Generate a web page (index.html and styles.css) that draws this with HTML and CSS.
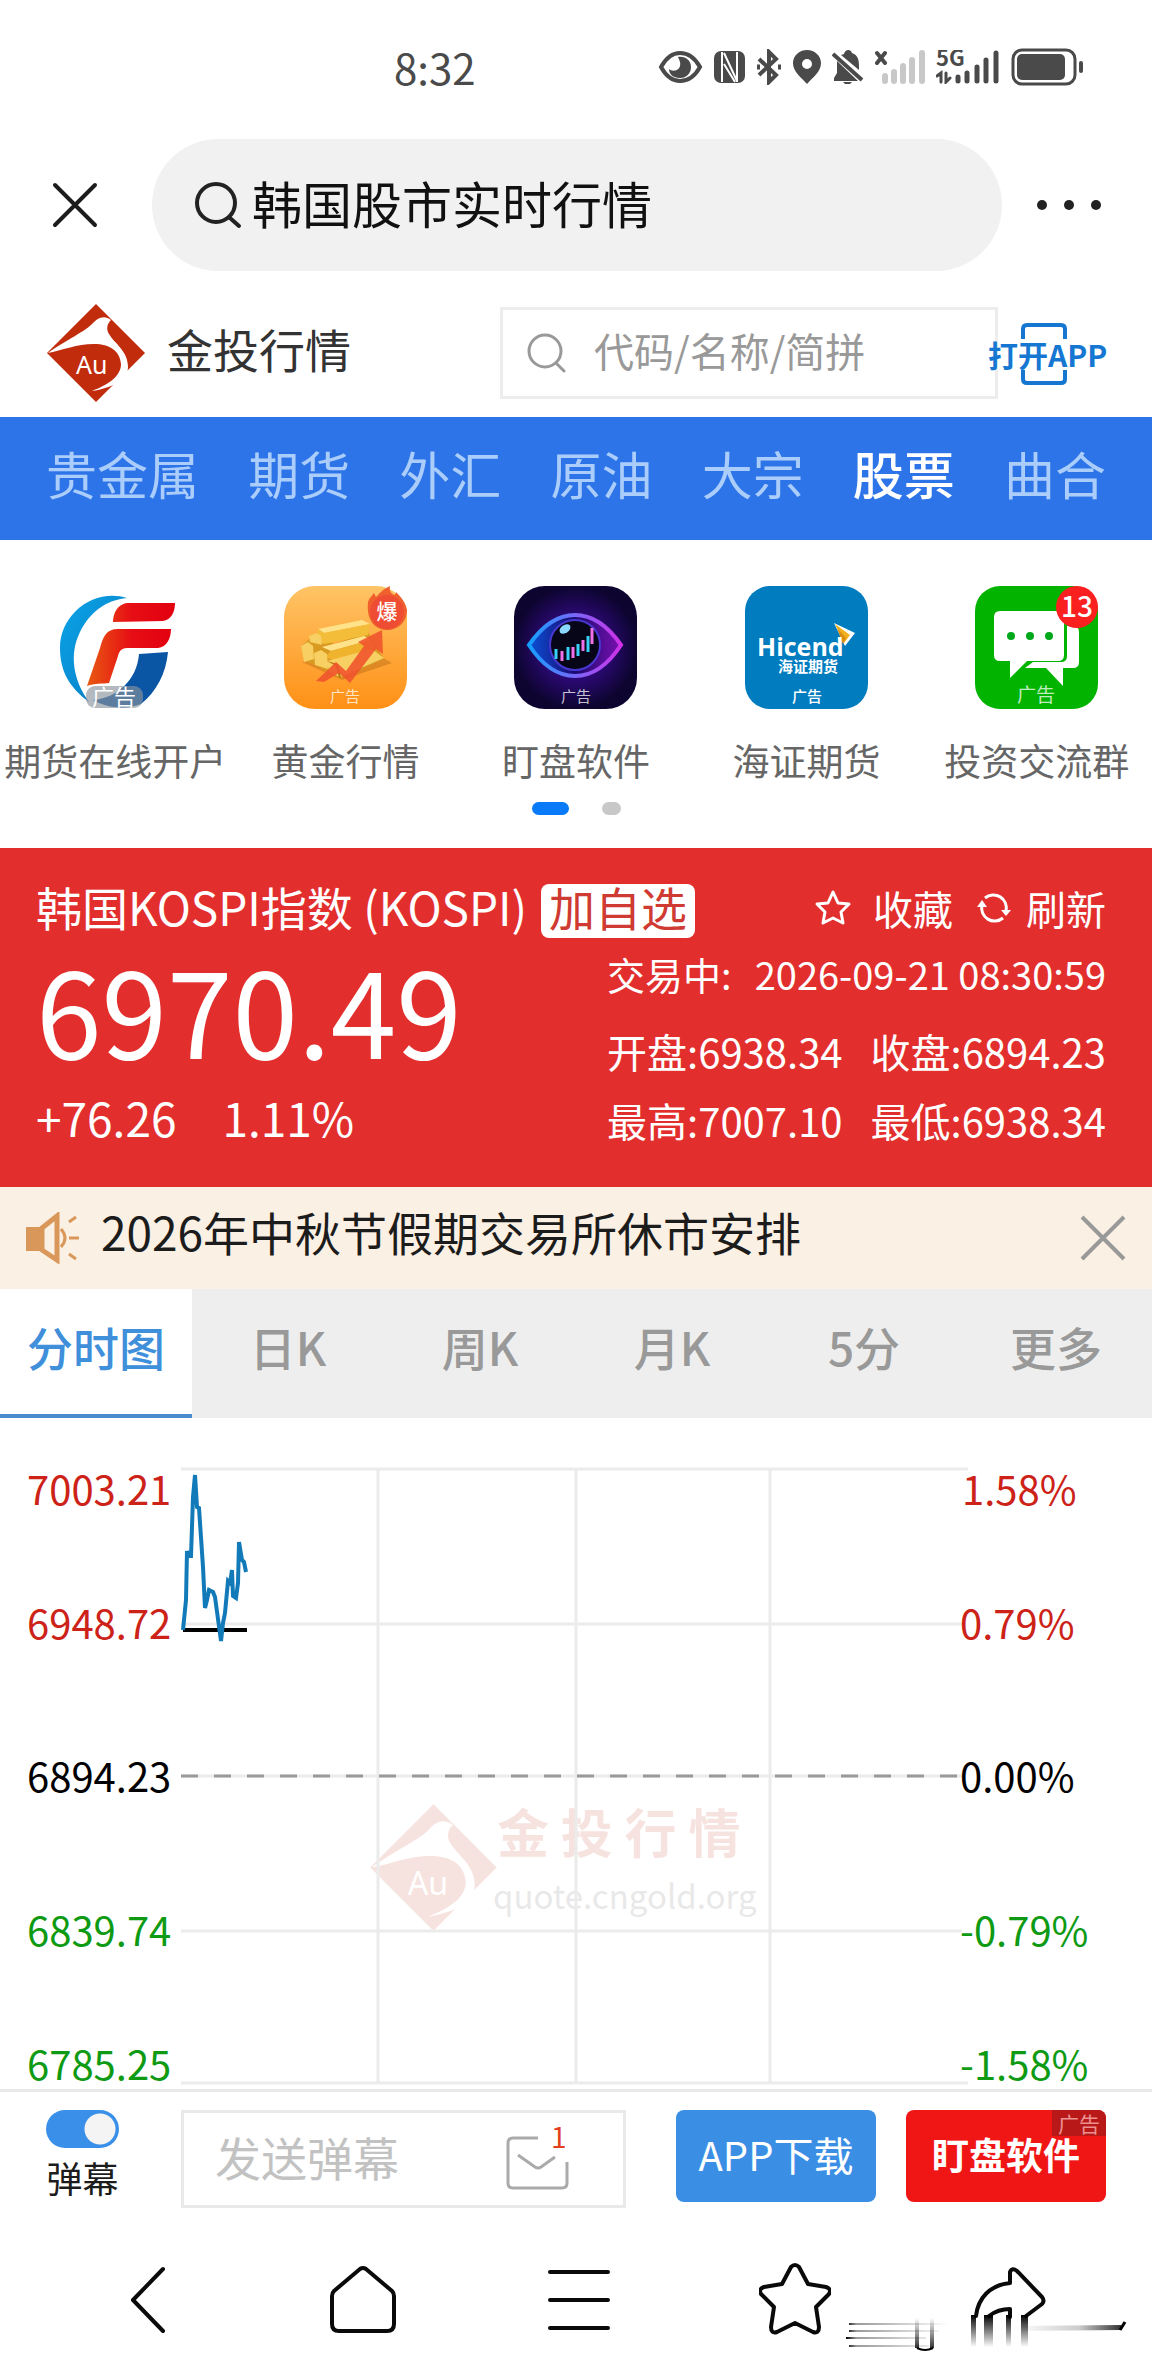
FILE: index.html
```html
<!DOCTYPE html>
<html lang="zh-CN">
<head>
<meta charset="utf-8">
<meta name="viewport" content="width=device-width, initial-scale=1">
<title>韩国股市实时行情</title>
<link rel="stylesheet" href="styles.css">
</head>
<body>
<svg width="0" height="0" class="defs" aria-hidden="true">
  <symbol id="au-logo" viewBox="0 0 100 100">
    <path fill="currentColor" d="M50 1 99 50 50 99 1 50Z"/>
    <path class="logo-cut" d="M2 50C20 37 40 28 47 20c5-6 12-8 18-3-4 4-5 9-2 14 6 10 19 17 19 33 0 13-16 21-36 24 15-6 29-14 29-27C74 48 64 41 48 41 30 41 18 47 2 50Z"/>
    <text class="logo-cut logo-au" x="30" y="71">Au</text>
  </symbol>
</svg>

<div class="status">
  <span class="time">8:32</span>
  <div class="status-icons">
    <svg width="45" height="34" viewBox="0 0 45 34" fill="none" stroke="#4a4a4a" stroke-width="4"><path d="M3 17C8 8 14 3 22 3s15 5 20 14C37 26 30 31 22 31S8 26 3 17Z"/><path fill="#4a4a4a" stroke="none" d="M20 7c8-1 13 4 13 10s-4 11-11 11-11-4-11-9c3 3 10 2 11-3 1-4-1-6-2-9Z"/></svg>
    <svg width="31" height="34" viewBox="0 0 31 34"><rect y="1" width="31" height="32" rx="7" fill="#4a4a4a"/><path d="M8 32V2M23 2v30M10 3l13 28M10 14l11 18" fill="none" stroke="#fff" stroke-width="2"/></svg>
    <svg width="26" height="36" viewBox="0 0 26 36" fill="none" stroke="#4a4a4a" stroke-width="4"><path d="m3 10 17 16-7 7V3l7 7L3 26"/><path d="m1 18 3 0m18 0 3 0" stroke-width="5"/></svg>
    <svg width="28" height="34" viewBox="0 0 28 34"><path fill="#4a4a4a" fill-rule="evenodd" d="M14 0c8 0 14 6 14 13 0 9-8 14-14 21C8 27 0 22 0 13 0 6 6 0 14 0Zm0 9a5 5 0 1 0 0 10 5 5 0 0 0 0-10Z"/></svg>
    <svg width="32" height="34" viewBox="0 0 32 34"><path fill="#4a4a4a" d="M12 4c1-5 7-5 8-1 6 2 7 7 7 13v4L9 5ZM5 11l21 20H2v-3l3-5ZM11 32h9l-2 2h-5Z"/><path d="m1 4 29 26" stroke="#4a4a4a" stroke-width="4"/></svg>
    <svg width="50" height="34" viewBox="0 0 50 34" stroke-width="6" stroke-linecap="round"><path d="m2 3 8 10m0-10L2 13" stroke="#4a4a4a" stroke-width="4"/><path d="M10 26v5m9-9v9m9-15v15m9-21v21M47 3v28" stroke="#c8c8c8"/></svg>
    <svg width="64" height="34" viewBox="0 0 64 34" stroke="#4a4a4a" stroke-width="5" stroke-linecap="round"><text class="fiveg" x="0" y="16">5G</text><path d="M22 27v4m9-8v8m10-14v14m9-21v21M60 3v28"/><path d="m1 26 4-3v9m5-9v9l4-4" fill="none" stroke-width="3"/></svg>
    <svg width="73" height="38" viewBox="0 0 73 38"><rect x="2" y="2" width="62" height="34" rx="9" fill="none" stroke="#4a4a4a" stroke-width="3"/><rect x="6" y="6" width="48" height="26" rx="5" fill="#4a4a4a"/><rect x="68" y="13" width="4" height="12" rx="2" fill="#4a4a4a"/></svg>
  </div>
</div>

<div class="address">
  <button class="plain" aria-label="关闭"><svg width="46" height="46" viewBox="0 0 46 46" stroke="#1c1c1c" stroke-width="4" stroke-linecap="round"><path d="m3 3 40 40m0-40L3 43"/></svg></button>
  <label class="pill">
    <svg width="48" height="48" viewBox="0 0 48 48" fill="none" stroke="#222" stroke-width="4" stroke-linecap="round"><circle cx="22" cy="22" r="19"/><path d="m36 37 9 8"/></svg>
    <input type="text" value="韩国股市实时行情" aria-label="搜索">
  </label>
  <button class="plain" aria-label="更多"><svg width="68" height="12" viewBox="0 0 68 12" fill="#222"><circle cx="6" cy="6" r="5"/><circle cx="33" cy="6" r="5"/><circle cx="60" cy="6" r="5"/></svg></button>
</div>

<header class="site">
  <svg class="logo" width="100" height="100"><use href="#au-logo"/></svg>
  <h1>金投行情</h1>
  <label class="search">
    <svg width="40" height="40" viewBox="0 0 40 40" fill="none" stroke="#999" stroke-width="3" stroke-linecap="round"><circle cx="18" cy="18" r="16"/><path d="m30 31 7 7"/></svg>
    <input type="text" placeholder="代码/名称/简拼" aria-label="代码/名称/简拼">
  </label>
  <a class="open-app" href="#app"><svg width="120" height="64" viewBox="0 0 120 64"><path d="M35 18V8q0-4 4-4h34q4 0 4 4v10M35 49v9q0 4 4 4h34q4 0 4-4v-9" fill="none" stroke="#1677d2" stroke-width="4"/><text x="0" y="46">打开APP</text></svg></a>
</header>

<nav class="markets">
  <a href="#gjs">贵金属</a><a href="#qh">期货</a><a href="#wh">外汇</a><a href="#yy">原油</a><a href="#dz">大宗</a><a href="#gp" class="on">股票</a><a href="#qu">曲合</a>
</nav>

<section class="apps">
  <div class="app-grid">
    <a href="#a1">
      <svg width="123" height="123" viewBox="0 0 123 123">
        <defs>
          <linearGradient id="fb" x1="0" y1="0" x2="1" y2="1"><stop offset="0" stop-color="#0aa5e8"/><stop offset=".6" stop-color="#0a8ad0"/><stop offset="1" stop-color="#0b4d94"/></linearGradient>
          <linearGradient id="fr"><stop offset="0" stop-color="#e85a12"/><stop offset=".5" stop-color="#e60e14"/><stop offset="1" stop-color="#e2000f"/></linearGradient>
        </defs>
        <path fill="url(#fb)" d="M73 12C40 2 6 28 6 62c0 24 10 40 29 54-16-22-20-48-9-70C36 26 52 14 73 12Z"/>
        <path fill="#0b55a5" d="M85 68l29-2c-2 22-12 40-27 52-16 6-34 4-48-4 24-2 44-20 46-46Z"/>
        <path fill="url(#fr)" d="M59 36c0-9 5-18 14-19h48c0 9-4 17-12 18ZM33 100l13-38c3-11 6-19 18-19h53c0 9-4 18-13 19H73c-6 0-8 4-9 8l-9 27c-7 1-14 0-22 3Z"/>
        <rect x="32" y="100" width="57" height="22" rx="9" fill="#8b939b" opacity=".65"/>
        <text class="ad ad-lg" x="60" y="119">广告</text>
      </svg>
      <span>期货在线开户</span></a>
    <a href="#a2">
      <svg width="123" height="123" viewBox="0 0 123 123">
        <defs><linearGradient id="gold" x1="0" y1="0" x2="0" y2="1"><stop offset="0" stop-color="#ffc466"/><stop offset="1" stop-color="#ff9016"/></linearGradient></defs>
        <rect width="123" height="123" rx="31" fill="url(#gold)"/>
        <path fill="#b86a16" opacity=".45" d="m18 76 40 18 50-17-14-8Z"/>
        <path fill="#d99a22" d="M17 60 34 46l16 12 34-12 16 27-44 19-36-18Z"/>
        <path fill="#ffe28a" d="m34 43 44-9 8 4-46 9Z"/>
        <path fill="#f3bd3a" d="m34 43 6 4 46-9-2 11-44 9-8-5Z"/>
        <path fill="#ffe28a" d="m38 61 42-11 7 4-40 11Z"/>
        <path fill="#f0b32e" d="m47 65 40-11 3 9-38 12-11-4Z"/>
        <path fill="#f7cf62" d="m17 60 7-4 5 4 1 13-10 3Zm13 7 7-3 6 4 1 15-13-4ZM25 50l8-3 4 3 1 9-12-3ZM43 75l45-12 12 9-44 19-11-5Z"/>
        <path fill="#b97a12" d="m43 75 11 3 3 13-2 1-3-12Z"/>
        <path fill="#f0542d" d="m32 95 20-19 10 9 18-25-6-4 24-12 1 24-7-5-26 34-11-10-15 9Z" opacity=".9"/>
        <path fill="#f0602c" d="M84 16c1-4 4-6 6-9l2 4c4-4 7-8 14-11-1 5 1 8 5 9l1-3c5 5 10 11 11 18 0 12-9 20-20 20S82 35 84 16Z"/>
        <circle cx="103" cy="26" r="17" fill="#ef4c34"/>
        <text class="hot" x="103" y="33">爆</text>
        <text class="ad" x="61" y="116">广告</text>
      </svg>
      <span>黄金行情</span></a>
    <a href="#a3">
      <svg width="123" height="123" viewBox="0 0 123 123">
        <defs>
          <radialGradient id="night"><stop offset="0" stop-color="#4a08b8"/><stop offset=".6" stop-color="#260868"/><stop offset="1" stop-color="#0d0530"/></radialGradient>
          <linearGradient id="neon"><stop offset="0" stop-color="#14a0ff"/><stop offset=".5" stop-color="#7868f8"/><stop offset="1" stop-color="#d030e8"/></linearGradient>
          <linearGradient id="iris"><stop offset="0" stop-color="#0a50d8"/><stop offset=".5" stop-color="#1b0a70"/><stop offset="1" stop-color="#7a10b0"/></linearGradient>
        </defs>
        <rect width="123" height="123" rx="31" fill="url(#night)"/>
        <path fill="url(#iris)" stroke="url(#neon)" stroke-width="4" d="M15 59C28 40 43 29 61 29s33 11 46 30C94 79 79 90 61 90S28 79 15 59Z"/>
        <circle cx="61" cy="59" r="25" fill="#060618" stroke="#4838d0" stroke-width="2"/>
        <path stroke="#38d0f8" stroke-width="3" d="M42 63v10m12-12v13m10-16v12m10-20v16"/><path stroke="#f070e8" stroke-width="3" d="M48 65v10m11-14v11m10-18v11m9-23v16"/>
        <ellipse cx="51" cy="43" rx="6" ry="4" fill="#8ad8ff" transform="rotate(-35 51 43)"/>
        <text class="ad" x="62" y="116">广告</text>
      </svg>
      <span>盯盘软件</span></a>
    <a href="#a4">
      <svg width="123" height="123" viewBox="0 0 123 123">
        <rect width="123" height="123" rx="25" fill="#007cbf"/>
        <path fill="#fff" d="m89 37 21 10-10 13Z"/><path fill="#f0b020" d="m90 38 15 11-6 8Z"/><path fill="#d88c10" d="m92 42 6 16 3-6Z"/>
        <text class="hicend" x="12" y="70">Hicend</text>
        <text class="hicend-cn" x="33" y="86">海证期货</text>
        <text class="ad strong" x="62" y="116">广告</text>
      </svg>
      <span>海证期货</span></a>
    <a href="#a5">
      <svg width="123" height="123" viewBox="0 0 123 123">
        <rect width="123" height="123" rx="25" fill="#02b400"/>
        <path fill="#fff" d="M92 40h6q6 0 6 6v30q0 6-6 6H88v18L71 82H50l8-6h28q6 0 6-6Z"/>
        <path fill="#fff" d="M25 25h58q6 0 6 6v38q0 6-6 6H52L35 92V75H25q-6 0-6-6V31q0-6 6-6Z"/>
        <g fill="#02a81c"><circle cx="36" cy="50" r="4"/><circle cx="55" cy="50" r="4"/><circle cx="74" cy="50" r="4"/></g>
        <circle cx="102" cy="21" r="21" fill="#fa2020"/>
        <text class="count" x="102" y="31">13</text>
        <text class="ad ad-md" x="61" y="116">广告</text>
      </svg>
      <span>投资交流群</span></a>
  </div>
  <div class="dots"><i class="on"></i><i></i></div>
</section>

<section class="quote">
  <div class="quote-top">
    <h2>韩国KOSPI指数 (KOSPI)</h2>
    <button class="add">加自选</button>
    <div class="quote-actions">
      <button class="act"><svg width="38" height="38" viewBox="0 0 38 38" fill="none" stroke="#fff" stroke-width="3" stroke-linejoin="round"><path d="m19 3 5 11 11 1-8 8 2 11-10-5-10 5 2-11-8-8 11-1Z"/></svg>收藏</button>
      <button class="act refresh"><svg width="34" height="34" viewBox="0 0 34 34" fill="none" stroke="#fff" stroke-width="3"><path d="M8 7a13 13 0 0 1 21 13M26 27A13 13 0 0 1 5 14"/><path fill="#fff" stroke="none" d="m24 19 10 0-5 6ZM0 16l10 0-5-7Z"/></svg>刷新</button>
    </div>
  </div>
  <div class="quote-body">
    <div>
      <div class="price">6970.49</div>
      <div class="change"><span>+76.26</span><span>1.11%</span></div>
    </div>
    <div class="facts">
      <div class="when"><span>交易中:</span><time>2026-09-21 08:30:59</time></div>
      <div class="pair"><span>开盘:6938.34</span><span>收盘:6894.23</span></div>
      <div class="pair"><span>最高:7007.10</span><span>最低:6938.34</span></div>
    </div>
  </div>
</section>

<div class="notice">
  <svg width="54" height="52" viewBox="0 0 54 52" fill="none" stroke="#d9985a" stroke-width="5"><path fill="#d9985a" stroke="none" d="M0 15h16v24H0Z"/><path d="m16 16 15-12v44L16 38Z"/><path d="M35 17q8 9 0 18M43 26h10M43 10l7-5M43 42l7 5" stroke-width="3"/></svg>
  <a href="#notice">2026年中秋节假期交易所休市安排</a>
  <button class="plain" aria-label="关闭"><svg width="46" height="46" viewBox="0 0 46 46" stroke="#999" stroke-width="4"><path d="m2 2 42 42m0-42L2 44"/></svg></button>
</div>

<nav class="periods">
  <button class="on">分时图</button><button>日K</button><button>周K</button><button>月K</button><button>5分</button><button>更多</button>
</nav>

<svg class="chart" viewBox="0 0 1152 671" role="img" aria-label="分时图">
  <g opacity=".13" class="mark">
    <svg x="369" y="384" width="129" height="131"><use href="#au-logo"/></svg>
    <text class="mark-cn" x="497" y="435">金 投 行 情</text>
    <text class="mark-url" x="493" y="491">quote.cngold.org</text>
  </g>
  <path class="grid" d="M181 51H968M181 206H962M181 358H962M181 513H962M181 665H968M378 51V665M576 51V665M770 51V665"/>
  <path class="mid" d="M181 358H960"/>
  <path d="M183 212H247" stroke="#000" stroke-width="4"/>
  <path class="line" d="M183 212 186 182 187 133 188 138H191L193 79 195 57 197 89 199 90 203 149 205 190 207 182 209 172 213 174 215 179 221 223 223 205 225 195 228 163 230 165 232 152 233 178 236 180 238 165 239 124 242 142 244 144 246 154"/>
  <g class="up"><text x="27" y="87">7003.21</text><text x="27" y="221">6948.72</text><text x="962" y="87">1.58%</text><text x="960" y="221">0.79%</text></g>
  <g><text x="27" y="374">6894.23</text><text x="960" y="374">0.00%</text></g>
  <g class="down"><text x="27" y="528">6839.74</text><text x="27" y="662">6785.25</text><text x="960" y="528">-0.79%</text><text x="960" y="662">-1.58%</text></g>
</svg>

<div class="danmu">
  <label class="toggle"><input type="checkbox" checked>弹幕</label>
  <div class="send">
    <input type="text" placeholder="发送弹幕" aria-label="发送弹幕">
    <button class="plain" aria-label="消息"><svg width="64" height="66" viewBox="0 0 64 66" fill="none" stroke="#aaa" stroke-width="3"><path d="M32 12H7q-5 0-5 5v40q0 5 5 5h49q5 0 5-5V36"/><path d="m12 29 17 12q3 2 6 0l14-10"/><text class="mail-count" x="45" y="22">1</text></svg></button>
  </div>
  <button class="cta">APP下载</button>
  <button class="cta hot-cta">盯盘软件<small>广告</small></button>
</div>

<nav class="browser">
  <button class="plain" aria-label="后退"><svg width="36" height="70" viewBox="0 0 36 70"><path d="M33 4 3 35l30 31"/></svg></button>
  <button class="plain" aria-label="主页"><svg width="66" height="70" viewBox="0 0 66 70"><path d="M30 4q3-2 6 0l26 22q2 2 2 5v28q0 7-7 7H9q-7 0-7-7V31q0-3 2-5Z"/></svg></button>
  <button class="plain" aria-label="菜单"><svg width="62" height="70" viewBox="0 0 62 70"><path d="M2 7h58M2 35h58M2 63h58"/></svg></button>
  <button class="plain" aria-label="收藏"><svg width="72" height="76" viewBox="0 0 72 76"><path d="M32 5q4-4 8 0l9 17 18 3q6 2 3 7L57 45l3 20q0 7-6 5L36 61 18 70q-6 2-6-5l3-20L2 32q-3-5 3-7l18-3Z"/></svg></button>
  <button class="plain" aria-label="分享"><svg width="76" height="70" viewBox="0 0 76 70"><path d="M4 51C6 33 18 20 38 18V7q2-5 7-1l25 26q3 4 0 7L54 51M17 51q9-7 21-7v8"/></svg></button>
  <svg class="streaks" width="282" height="42" viewBox="0 0 282 42" aria-hidden="true">
    <defs>
      <linearGradient id="sv" x1="0" y1="0" x2="0" y2="1"><stop offset="0"/><stop offset="1" stop-opacity="0"/></linearGradient>
      <linearGradient id="su" x1="0" y1="1" x2="0" y2="0"><stop offset="0" stop-opacity=".8"/><stop offset="1" stop-opacity="0"/></linearGradient>
      <linearGradient id="sl"><stop offset="0"/><stop offset=".1" stop-opacity=".4"/><stop offset="1" stop-opacity="0"/></linearGradient>
      <linearGradient id="sr" x1="1" x2="0"><stop offset="0" stop-opacity=".8"/><stop offset=".4" stop-opacity=".2"/><stop offset="1" stop-opacity="0"/></linearGradient>
    </defs>
    <path fill="url(#sl)" d="M3 13h100v2H3ZM3 20h90v2H3ZM0 27h80v2H0ZM3 35h80v2H3Z"/>
    <path fill="url(#su)" d="M69 8h4v30h-4ZM84 8h4v30h-4Z"/><path d="M71 38q8 4 16 0" fill="none" stroke="#000" stroke-width="2"/>
    <path fill="url(#sv)" d="M125 5h5v32h-5ZM138 5h9v32h-9ZM160 5h5v32h-5ZM175 5h7v32h-7Z"/>
    <path fill="url(#sr)" d="M170 16 275 15v5l-105 1Z"/><path d="m274 20 5-8" stroke="#000" stroke-width="3"/>
  </svg>
</nav>
</body>
</html>
```
FILE: styles.css
```css
* { box-sizing: border-box; }
body {
  margin: 0;
  background: #fff;
  color: #1c1c1c;
  font-family: "Noto Sans CJK SC", "Noto Sans", sans-serif;
}
a { color: inherit; text-decoration: none; }
svg { display: block; flex: none; }
h1, h2 { margin: 0; font-weight: 400; }
button, input { font: inherit; color: inherit; }
button { border: 0; padding: 0; cursor: pointer; }
.defs { position: absolute; }
.plain { background: none; flex: none; display: flex; justify-content: center; align-items: center; }
input[type="text"] {
  border: 0;
  padding: 0 0 6px;
  background: none;
  outline: 0;
  min-width: 0;
  flex: 1;
}
input::placeholder { opacity: 1; }

.status {
  display: flex;
  justify-content: space-between;
  align-items: center;
  padding: 36px 68px 12px 394px;
  line-height: 62px;
}
.time { font-size: 42px; color: #4a4a4a; }
.status-icons { display: flex; align-items: center; gap: 11px; }
.fiveg { font-size: 22px; font-weight: 700; fill: #4a4a4a; stroke: none; }

.address { display: flex; align-items: center; padding: 29px 48px 29px 52px; }
.pill {
  flex: 1;
  display: flex;
  align-items: center;
  gap: 10px;
  height: 132px;
  margin: 0 34px 0 54px;
  padding: 0 42px;
  border-radius: 66px;
  background: #f1f1f1;
}
.pill input { font-size: 50px; color: #111; }

.site { display: flex; align-items: center; padding: 3px 46px 14px; }
.logo { color: #c02c0c; margin-right: 21px; }
.logo-cut { fill: #fff; }
.logo-au { font-size: 25px; font-family: "Noto Sans", sans-serif; }
.site h1 { padding-bottom: 10px; font-size: 46px; line-height: 60px; color: #333; }
.search {
  display: flex;
  align-items: center;
  gap: 27px;
  flex: 0 1 498px;
  min-width: 0;
  height: 92px;
  margin-left: auto;
  padding: 0 24px;
  border: 3px solid #ededed;
}
.search input { font-size: 40px; color: #333; }
.search input::placeholder { color: #999; }
.open-app { margin: 0 -2px 0 -10px; }
.open-app text { font-size: 30px; font-weight: 700; fill: #1677d2; }

.markets {
  display: flex;
  justify-content: space-between;
  padding: 0 46px 10px;
  background: #2d74e8;
  color: #abcdfb;
  font-size: 51px;
  line-height: 113px;
}
.markets .on { color: #fff; font-weight: 500; }

.apps { padding: 46px 0 33px; }
.app-grid { display: grid; grid-template-columns: repeat(5, 1fr); }
.app-grid a { display: flex; flex-direction: column; align-items: center; }
.app-grid span { font-size: 37px; line-height: 50px; margin-top: 26px; color: #666; white-space: nowrap; }
.ad { font-size: 15px; fill: #fff; fill-opacity: .75; text-anchor: middle; }
.ad-md { font-size: 19px; }
.ad-lg { font-size: 22px; fill-opacity: 1; }
.ad.strong { fill-opacity: 1; font-weight: 500; }
.hot { font-size: 21px; font-weight: 500; fill: #fff; text-anchor: middle; }
.count { font-size: 28px; font-weight: 500; fill: #fff; text-anchor: middle; }
.hicend { font: 700 25px "Open Sans", sans-serif; fill: #fff; }
.hicend-cn { font-size: 15px; font-weight: 700; fill: #fff; }
.dots { display: flex; justify-content: center; gap: 33px; margin-top: 17px; }
.dots i { width: 19px; height: 13px; border-radius: 7px; background: #c8c8c8; }
.dots .on { width: 37px; background: #0a7bf8; }

.quote { background: #e32e2e; color: #fff; padding: 36px 46px 40px 36px; }
.quote-top { display: flex; align-items: flex-start; }
.quote-top h2 { font-size: 46px; line-height: 44px; }
.add {
  margin-left: 14px;
  padding: 0 8px 10px;
  border-radius: 8px;
  background: #fff;
  color: #cf3a32;
  font-size: 46px;
  line-height: 44px;
}
.quote-actions { display: flex; margin-left: auto; gap: 24px; }
.act { display: flex; align-items: center; gap: 21px; background: none; font-size: 40px; line-height: 48px; }
.refresh { gap: 15px; }
.quote-body { display: flex; justify-content: space-between; margin-top: 10px; }
.price { font-size: 118px; line-height: 120px; }
.change { display: flex; gap: 46px; margin-top: 19px; font-size: 46px; line-height: 60px; }
.facts { font-size: 40px; line-height: 52px; }
.when { display: flex; justify-content: space-between; margin-bottom: 25px; font-size: 38px; }
.pair { display: flex; justify-content: space-between; gap: 28px; }
.pair + .pair { margin-top: 17px; }

.notice { display: flex; align-items: center; height: 102px; padding: 0 26px; background: #fbf0e4; }
.notice a { flex: 1; margin-left: 21px; padding-bottom: 14px; font-size: 46px; line-height: 60px; }

.periods { display: grid; grid-template-columns: repeat(6, 1fr); background: #eee; }
.periods button {
  padding-bottom: 11px;
  border-bottom: 4px solid transparent;
  background: none;
  color: #999;
  font-size: 46px;
  font-weight: 500;
  line-height: 114px;
}
.periods .on { background: #fff; color: #3f8fdb; border-color: #4a8bd0; }

.chart { width: 100%; height: auto; font-size: 40px; }
.grid { stroke: #ebebeb; stroke-width: 3; fill: none; }
.mid { stroke: #999; stroke-width: 3; stroke-dasharray: 17 16; }
.line { fill: none; stroke: #127ab8; stroke-width: 4; }
.up { fill: #cc2218; }
.down { fill: #0f9a14; }
.mark { color: #c02c0c; }
.mark-cn { font-size: 52px; font-weight: 700; fill: #c02c0c; }
.mark-url { font-size: 33px; fill: #555; }

.danmu { display: flex; align-items: flex-start; padding: 18px 46px 14px; border-top: 3px solid #e9e9e9; }
.toggle { display: flex; flex-direction: column; align-items: center; width: 73px; margin-right: 62px; font-size: 36px; line-height: 58px; }
.toggle input {
  appearance: none;
  width: 73px;
  height: 38px;
  margin: 0;
  border-radius: 19px;
  background: radial-gradient(circle 16px at 54px 19px, #f4f4f4 15px, #3a8fe8 16px);
}
.send {
  display: flex;
  align-items: center;
  flex: 0 1 445px;
  min-width: 0;
  height: 98px;
  padding: 0 53px 0 31px;
  border: 3px solid #e9e9e9;
}
.send input { font-size: 46px; }
.send input::placeholder { color: #c2c2c2; }
.mail-count { font-size: 28px; fill: #e0401c; stroke: none; }
.cta {
  position: relative;
  flex: none;
  width: 200px;
  height: 92px;
  margin-left: auto;
  padding-bottom: 4px;
  border-radius: 8px;
  background: #3a8fe5;
  color: #fff;
  font-size: 40px;
}
.hot-cta { margin-left: 30px; background: #f01616; font-size: 37px; font-weight: 700; overflow: hidden; }
.hot-cta small {
  position: absolute;
  top: 0;
  right: 0;
  padding: 0 6px;
  background: #b81818;
  color: #ec9090;
  font-size: 21px;
  font-weight: 400;
  line-height: 26px;
}

.browser { position: relative; display: grid; grid-template-columns: repeat(5, 1fr); padding: 40px 34px 39px 40px; }
.browser button svg { fill: none; stroke: #0a0a0a; stroke-width: 4; stroke-linejoin: round; stroke-linecap: round; }
.streaks { position: absolute; right: 24px; bottom: 25px; }
```
